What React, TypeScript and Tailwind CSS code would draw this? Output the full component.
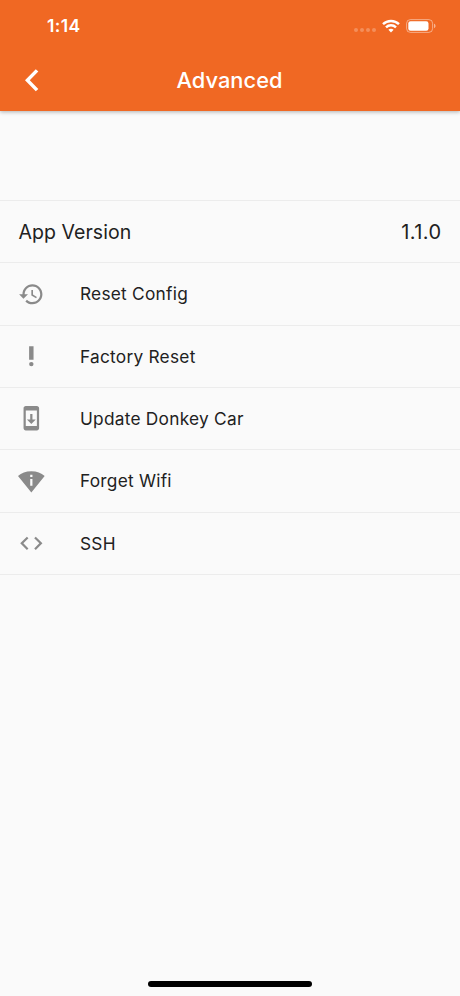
import React from "react";

const ICONS = {
  restore:
    "M13 3c-4.97 0-9 4.03-9 9H1l3.89 3.89.07.14L9 12H6c0-3.87 3.13-7 7-7s7 3.13 7 7-3.13 7-7 7c-1.93 0-3.68-.79-4.94-2.06l-1.42 1.42C8.27 19.99 10.51 21 13 21c4.97 0 9-4.03 9-9s-4.03-9-9-9zm-1 5v5l4.28 2.54.72-1.21-3.5-2.08V8H12z",
  priority: "M10 3h4v12h-4zM12 17a2 2 0 1 0 0 4 2 2 0 0 0 0-4z",
  update:
    "M17 1.01L7 1c-1.1 0-2 .9-2 2v18c0 1.1.9 2 2 2h10c1.1 0 2-.9 2-2V3c0-1.1-.9-1.99-2-1.99zM17 19H7V5h10v14zm-1-6h-3V8h-2v5H8l4 4 4-4z",
  wifiInfo:
    "M12 3C6.95 3 3.15 4.85 0 7.23L12 22 24 7.25C20.85 4.87 17.05 3 12 3zm1 13h-2v-6h2v6zm-2-8V6h2v2h-2z",
  code: "M9.4 16.6L4.8 12l4.6-4.6L8 6l-6 6 6 6 1.4-1.4zm5.2 0l4.6-4.6-4.6-4.6L16 6l6 6-6 6-1.4-1.4z",
  back: "M12 4.1L9.7 2.1 0 12l9.7 9.9 2.3-2L4.3 12z",
};

function Icon({ d, className }: { d: string; className?: string }) {
  return (
    <svg viewBox="0 0 24 24" fill="currentColor" className={`h-[26.67px] w-[26.67px] shrink-0 ${className ?? ""}`}>
      <path d={d} />
    </svg>
  );
}

const ITEMS = [
  { icon: ICONS.restore, label: "Reset Config" },
  { icon: ICONS.priority, label: "Factory Reset" },
  { icon: ICONS.update, label: "Update Donkey Car" },
  { icon: ICONS.wifiInfo, label: "Forget Wifi" },
  { icon: ICONS.code, label: "SSH" },
];

function StatusBar() {
  return (
    <div className="flex h-[50px] items-center justify-between pr-[24px] pl-[47px]">
      <span className="pt-[2px] text-[17.5px] leading-none font-semibold tracking-[0.4px]">1:14</span>
      <div className="flex items-center pt-[1px]">
        <div className="mt-[9px] mr-[6px] flex gap-[2px]">
          {[0, 1, 2, 3].map((i) => (
            <span key={i} className="h-[4px] w-[4px] rounded-full bg-white/25" />
          ))}
        </div>
        <svg viewBox="0 0 18 14" className="mr-[6px] h-[14px] w-[18px]" fill="none" stroke="white" strokeWidth="2.4">
          <path d="M1 5.2C5.4 .9 12.6 .9 17 5.2" />
          <path d="M4 8.3C6.8 5.5 11.2 5.5 14 8.3" />
          <path d="M6.4 10.8C7.9 9.5 10.1 9.5 11.6 10.8L9 13.5Z" fill="white" stroke="none" />
        </svg>
        <svg viewBox="0 0 30 14" className="h-[14px] w-[30px]">
          <rect x=".6" y=".6" width="26" height="12.8" rx="3.8" fill="none" stroke="white" strokeOpacity=".45" />
          <rect x="2.3" y="2.3" width="20.2" height="9.4" rx="2.2" fill="white" />
          <path d="M28 4.8c2 .6 2 3.8 0 4.4z" fill="white" fillOpacity=".5" />
        </svg>
      </div>
    </div>
  );
}

export default function App() {
  return (
    <div className="flex h-[996px] w-[460px] flex-col bg-[#fafafa] font-['Inter',sans-serif] text-[#212121]">
      <header className="h-[111px] shrink-0 bg-[#f06823] text-white shadow-[0_1px_4px_rgba(0,0,0,0.3)]">
        <StatusBar />
        <div className="grid h-[60px] grid-cols-[80px_1fr_80px] items-center">
          <Icon d={ICONS.back} className="ml-[25px]" />
          <h1 className="pt-[1.5px] pr-px text-center text-[21.8px] leading-none font-medium tracking-[0.05px]">
            Advanced
          </h1>
        </div>
      </header>

      <main className="mt-[89px] grow">
        <div className="flex h-[62.35px] items-center justify-between border-t border-[#ececec] px-[18.5px] text-[19.5px]">
          <span className="pt-[1.5px] tracking-[0.05px]">App Version</span>
          <span className="text-[20px] tracking-[0.4px]">1.1.0</span>
        </div>
        <ul className="border-b border-[#ececec]">
          {ITEMS.map(({ icon, label }) => (
            <li key={label} className="flex h-[62.35px] items-center border-t border-[#ececec] pl-[18px]">
              <Icon d={icon} className="text-[#8a8a8a]" />
              <span className="ml-[35.3px] pt-[0.7px] text-[17.3px] tracking-[0.25px]">{label}</span>
            </li>
          ))}
        </ul>
      </main>

      <div className="mx-auto mb-[9px] h-[6px] w-[164px] shrink-0 rounded-full bg-black" />
    </div>
  );
}
